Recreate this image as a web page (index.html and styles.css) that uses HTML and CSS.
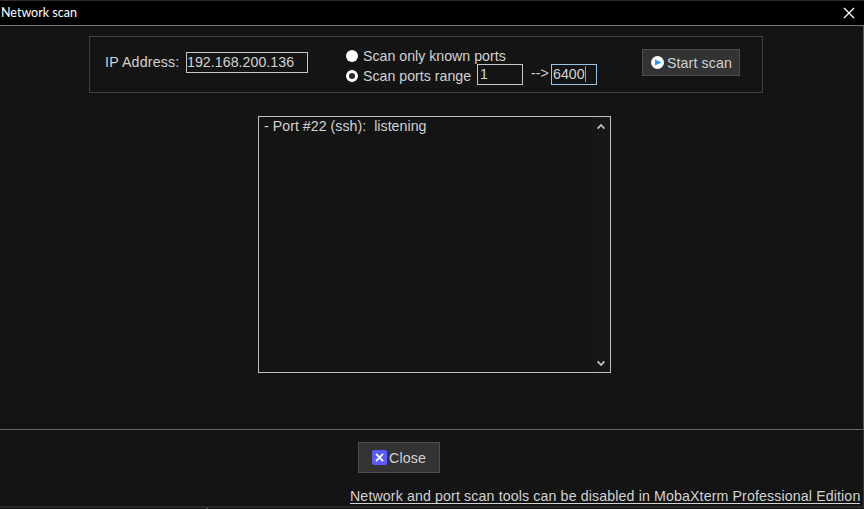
FILE: index.html
```html
<!DOCTYPE html>
<html lang="en">
<head>
<meta charset="utf-8">
<title>Network scan</title>
<link rel="stylesheet" href="styles.css">
</head>
<body>
<div class="window">
  <header class="titlebar">
    <span class="title">Network scan</span>
    <svg class="close-x" width="12" height="12" viewBox="0 0 12 12"><path d="M1 1l10 10M11 1L1 11"/></svg>
  </header>
  <main class="content">
    <section class="options">
      <span class="label">IP Address:</span>
      <span class="field ip">192.168.200.136</span>
      <div class="modes">
        <div class="mode"><i class="radio"></i><span>Scan only known ports</span></div>
        <div class="mode"><i class="radio checked"></i><span>Scan ports range</span></div>
      </div>
      <span class="field from">1</span>
      <span class="arrow">--&gt;</span>
      <span class="field to">6400<i class="caret"></i></span>
      <div class="button start">
        <svg width="13" height="13" viewBox="0 0 13 13"><circle cx="6.5" cy="6.5" r="6.5" fill="#fff"/><path d="M4 3.4l6.4 3.1L4 9.6z" fill="#2698f5"/></svg>
        <span>Start scan</span>
      </div>
    </section>
    <section class="results">
      <span class="result">- Port #22 (ssh):&nbsp; listening</span>
      <div class="scrollbar">
        <svg width="8" height="7" viewBox="0 0 8 7"><path d="M.6 5.6L4 2l3.4 3.6"/></svg>
        <svg width="8" height="7" viewBox="0 0 8 7"><path d="M.6 1.4L4 5l3.4-3.6"/></svg>
      </div>
    </section>
  </main>
  <footer class="footer">
    <div class="button close">
      <svg width="15" height="15" viewBox="0 0 15 15"><rect width="15" height="15" rx="2" fill="#5a5aff"/><path d="M4 3.8l7 7.4M11 3.8l-7 7.4" stroke="#fff" stroke-width="1.8"/></svg>
      <span>Close</span>
    </div>
    <a class="link">Network and port scan tools can be disabled in MobaXterm Professional Edition</a>
  </footer>
  <div class="edge"><i class="notch"></i></div>
</div>
</body>
</html>
```
FILE: styles.css
```css
* { box-sizing: border-box; }
body {
  margin: 0;
  background: #141414;
  color: #d2d2d2;
  font: 14.2px/16px "Liberation Sans", Arial, sans-serif;
  white-space: nowrap;
}
svg { display: block; flex: none; }
.window {
  width: 864px;
  height: 509px;
  display: flex;
  flex-direction: column;
  overflow: hidden;
}
.titlebar {
  height: 26px;
  display: flex;
  justify-content: space-between;
  align-items: center;
  padding: 0 9px 0 1px;
  background: #000;
  border-top: 1px solid #2c2c2c;
  border-bottom: 1px solid #777;
}
.title { color: #fff; font: 12.5px/16px Lato, sans-serif; }
.close-x { fill: none; stroke: #fff; stroke-width: 1.3; }
.content {
  height: 404px;
  padding: 10px 0 0 89px;
  border-right: 1px solid #555;
  border-bottom: 1px solid #666;
}
.options {
  width: 674px;
  height: 57px;
  display: flex;
  align-items: flex-start;
  border: 1px solid #404040;
  padding-left: 15px;
}
.label { width: 81px; padding-top: 17px; letter-spacing: .2px; }
.field {
  display: flex;
  height: 21px;
  line-height: 19px;
  border: 1px solid #c6c6c6;
  color: #d2d2d2;
}
.ip { width: 122px; margin-top: 15px; letter-spacing: .04px; }
.modes { width: 131px; margin: 9px 0 0 38px; }
.mode { display: flex; align-items: center; height: 20px; line-height: 20px; }
.mode span { margin-left: 5px; }
.radio {
  flex: none;
  width: 12px;
  height: 12px;
  border-radius: 50%;
  background: #fff;
}
.checked { background: #292929; border: 3px solid #fff; }
.from { width: 46px; margin-top: 27px; padding-left: 2px; }
.arrow { width: 20px; margin: 28px 0 0 8px; }
.to { width: 46px; margin-top: 27px; padding-left: 1px; border-color: #9bc4e8; }
.caret { width: 1px; height: 16px; margin-top: 1px; background: #999; }
.button {
  display: flex;
  align-items: center;
  background: #333;
  border: 1px solid #4e4e4e;
}
.start { width: 98px; height: 27px; margin: 12px 0 0 45px; padding-left: 8px; gap: 3px; letter-spacing: .1px; }
.results {
  width: 353px;
  height: 257px;
  display: flex;
  justify-content: space-between;
  margin: 23px 0 0 169px;
  padding-left: 5px;
  border: 1px solid #c0c0c0;
}
.result { padding-top: 1px; letter-spacing: .03px; }
.scrollbar {
  width: 18px;
  display: flex;
  flex-direction: column;
  justify-content: space-between;
  align-items: center;
  padding: 6px 0 5px;
  background: #171717;
}
.scrollbar path { fill: none; stroke: #c4c4c4; stroke-width: 1.8; }
.footer {
  height: 76px;
  display: flex;
  flex-direction: column;
  align-items: flex-start;
  padding-top: 12px;
  border-right: 1px solid #333;
}
.close { width: 82px; height: 31px; margin-left: 358px; padding-left: 13px; gap: 2px; letter-spacing: .15px; }
.link {
  height: 16px;
  margin: 15px 0 0 350px;
  border-bottom: 1px solid #d2d2d2;
  letter-spacing: .125px;
}
.edge { height: 3px; border-top: 2px solid #2a2a2a; background: #101010; padding-left: 206px; }
.notch { display: block; width: 2px; height: 1px; background: #555; }
```
